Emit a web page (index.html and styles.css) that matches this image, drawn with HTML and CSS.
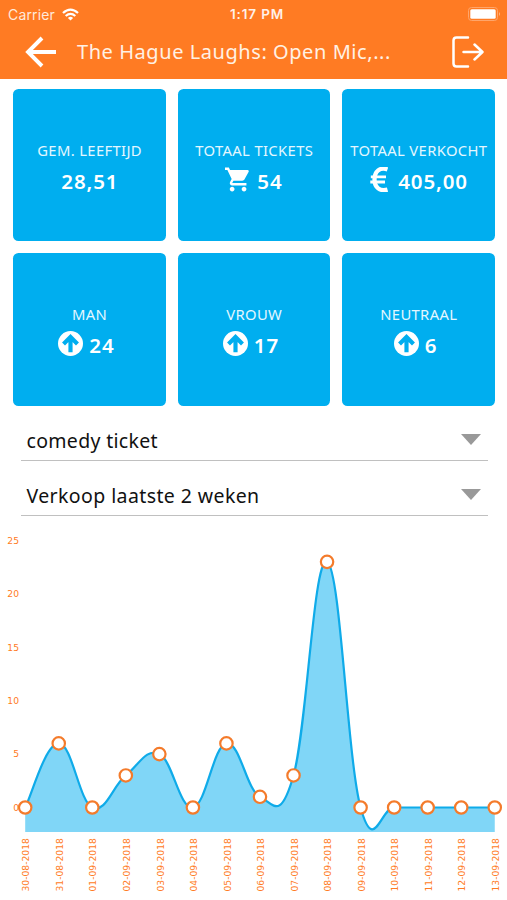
FILE: index.html
```html
<!DOCTYPE html>
<html lang="nl">
<head>
<meta charset="utf-8">
<meta name="viewport" content="width=device-width">
<title>The Hague Laughs: Open Mic</title>
<link rel="stylesheet" href="styles.css">
</head>
<body>
<header class="header">
  <div class="status">
    <div class="carrier"><span>Carrier</span>
      <svg class="wifi" width="17" height="13" viewBox="0 0 17 13" fill="none" stroke="#fff" stroke-width="2.300"><path d="M1 5Q8.500-1.800 16 5M3.700 8Q8.500 3.700 13.300 8"/><path d="M8.500 12.500L5.900 9.900Q8.500 7.800 11.100 9.900Z" fill="#fff" stroke="none"/></svg>
    </div>
    <span class="time">1:17 PM</span>
    <svg class="battery" width="34" height="14" viewBox="0 0 34 14"><rect x=".5" y=".5" width="29" height="13" rx="3" fill="none" stroke="#ffa56a"/><rect x="2.300" y="2.200" width="25.400" height="9.600" rx="1.500" fill="#fff"/><path d="M31 5Q33 7 31 9Z" fill="#ffb481"/></svg>
  </div>
  <div class="bar">
    <svg class="back" width="32" height="32" viewBox="0 0 32 32" fill="none" stroke="#fff" stroke-width="3.900"><path d="M31 16H3M17 2L3 16L17 30"/></svg>
    <h1 class="title">The Hague Laughs: Open Mic,...</h1>
    <svg class="logout" width="32" height="32" viewBox="0 0 32 32" fill="none" stroke="#fff" stroke-width="2.500" stroke-linecap="round" stroke-linejoin="round"><path d="M16 1.500H4.500Q1.500 1.500 1.500 4.500V27.500Q1.500 30.500 4.500 30.500H16M11.500 16H30M22.500 8.500L30.500 16L22.500 23.500"/></svg>
  </div>
</header>
<main>
  <section class="tiles">
    <div class="tile"><span class="label">GEM. LEEFTIJD</span><div class="value"><b>28,51</b></div></div>
    <div class="tile"><span class="label">TOTAAL TICKETS</span><div class="value"><svg class="icon cart" viewBox="1 2 21 20" fill="#fff"><path d="M7 18c-1.100 0-2 .9-2 2s.9 2 2 2 2-.9 2-2-.9-2-2-2zM1 2v2h2l3.600 7.600-1.350 2.450C4.500 15.400 5.500 17 7 17h12v-2H7.400c-.14 0-.25-.11-.25-.25L8.100 13h7.450c.75 0 1.400-.4 1.750-1l3.600-6.500C21.200 4.800 20.700 4 20 4H5.200L4.250 2H1zm16 16c-1.100 0-2 .9-2 2s.9 2 2 2 2-.9 2-2-.9-2-2-2z"/></svg><b>54</b></div></div>
    <div class="tile"><span class="label">TOTAAL VERKOCHT</span><div class="value sold"><svg class="euro" viewBox="0 0 18 25" fill="none" stroke="#fff"><path d="M17.500 2.400C10-.3 4.500 4.500 4.500 12.500S10 24.700 17.500 22.600" stroke-width="4.300"/><path d="M.8 9.800H16M.3 15H15" stroke-width="2.800"/></svg><b>405,00</b></div></div>
    <div class="tile"><span class="label">MAN</span><div class="value trend"><svg class="icon" viewBox="0 0 24 24"><circle cx="12" cy="12" r="12" fill="#fff"/><path d="M12 20.500V6M5.300 12.500L12 5.800L18.700 12.500" fill="none" stroke="#00aeef" stroke-width="4"/></svg><b>24</b></div></div>
    <div class="tile"><span class="label">VROUW</span><div class="value trend"><svg class="icon" viewBox="0 0 24 24"><circle cx="12" cy="12" r="12" fill="#fff"/><path d="M12 20.500V6M5.300 12.500L12 5.800L18.700 12.500" fill="none" stroke="#00aeef" stroke-width="4"/></svg><b>17</b></div></div>
    <div class="tile"><span class="label">NEUTRAAL</span><div class="value trend"><svg class="icon" viewBox="0 0 24 24"><circle cx="12" cy="12" r="12" fill="#fff"/><path d="M12 20.500V6M5.300 12.500L12 5.800L18.700 12.500" fill="none" stroke="#00aeef" stroke-width="4"/></svg><b>6</b></div></div>
  </section>
  <section class="filters">
    <div class="select ticket"><span>comedy ticket</span><i class="caret"></i></div>
    <div class="select"><span>Verkoop laatste 2 weken</span><i class="caret"></i></div>
  </section>
  <svg id="chart" class="chart" width="507" height="384" viewBox="0 516 507 384"></svg>
</main>
<script src="chart.js"></script>
</body>
</html>
```
FILE: styles.css
```css
* { box-sizing: border-box; }
body { margin: 0; width: 507px; height: 900px; overflow: hidden; background: #fff; font-family: "Noto Sans", sans-serif; }
svg { display: block; flex: none; }
.header { height: 79.3px; background: #ff7b23; color: #fff; }
.status { height: 27px; display: grid; grid-template-columns: 1fr auto 1fr; align-items: center; padding: 0 5px 0 8px; font: 14px/27px Inter, sans-serif; }
.carrier { display: flex; align-items: center; gap: 7px; color: #ffe9db; letter-spacing: .15px; }
.time { font-weight: 600; font-size: 13.500px; color: #fff1e8; letter-spacing: .85px; margin-left: 4px; padding-top: 1px; }
.battery { justify-self: end; }
.bar { height: 50px; display: flex; align-items: center; padding: 0 23px 0 25px; }
.title { margin: 0 0 0 20px; flex: 1; font-size: 20px; line-height: 30px; font-weight: 400; letter-spacing: .56px; white-space: nowrap; color: #fff1e4; }
.tiles { display: grid; grid-template-columns: repeat(3, 152.3px); grid-auto-rows: 152.3px; gap: 12.3px; padding: 9.500px 13.300px 0; }
.tile { display: flex; flex-direction: column; align-items: center; padding-top: 50px; border-radius: 5.500px; background: #00aeef; color: #fff; white-space: nowrap; }
.label { font-size: 14.800px; line-height: 22px; letter-spacing: .35px; margin-right: -.35px; color: #e4f7ff; }
.value { display: flex; align-items: center; height: 38px; gap: 7px; font-size: 20.500px; line-height: 38px; }
.value b { font-weight: 600; letter-spacing: .9px; margin-right: -.9px; padding-top: 2px; }
.icon { width: 25px; height: 25px; }
.cart { margin-left: -1px; }
.euro { width: 18px; height: 25px; }
.sold { gap: 10px; }
.trend { margin-right: 7px; }
.trend .icon { margin-top: -1px; }
.trend b { margin-left: -1px; }
.filters { padding: 15px 19.500px 0 20.500px; }
.select { height: 40px; display: flex; align-items: center; justify-content: space-between; border-bottom: 1.500px solid #c0c0c0; padding: 0 7px 0 6px; font-size: 19.500px; letter-spacing: .4px; color: #111; }
.ticket { letter-spacing: .32px; }
.select + .select { margin-top: 15px; }
.caret { border: solid transparent; border-width: 11px 10.500px 0; border-top-color: #999; margin-top: -2px; }
.chart { font-family: "DejaVu Sans", sans-serif; font-size: 9.200px; fill: #ff7b23; }
.area { fill: #80d6f7; }
.line { fill: none; stroke: #0fabe9; stroke-width: 2.200; }
.dot { fill: #fff; stroke: #f47b2b; stroke-width: 2.200; }
```
FILE: chart.js
```js
const values = [0, 6, 0, 3, 5, 0, 6, 1, 3, 23, 0, 0, 0, 0, 0];
const dates = ['30-08-2018', '31-08-2018', '01-09-2018', '02-09-2018', '03-09-2018', '04-09-2018', '05-09-2018', '06-09-2018', '07-09-2018', '08-09-2018', '09-09-2018', '10-09-2018', '11-09-2018', '12-09-2018', '13-09-2018'];
const yOf = v => 807.5 - v * 10.68;
const pts = values.map((v, i) => [25.2 + i * 33.54, yOf(v)]);
const at = i => pts[Math.max(0, Math.min(pts.length - 1, i))];
const tension = 0.2;
let line = `M${pts[0]}`;
for (let i = 1; i < pts.length; i++) {
  const a = at(i - 2), b = at(i - 1), c = at(i), d = at(i + 1);
  line += `C${b.map((v, k) => v + (c[k] - a[k]) * tension)} ${c.map((v, k) => v - (d[k] - b[k]) * tension)} ${c}`;
}
let out = `<path class="area" d="${line}V832H${pts[0][0]}Z"/><path class="line" d="${line}"/>`;
for (let v = 0; v <= 25; v += 5) out += `<text x="19" y="${yOf(v) + 3.3}" text-anchor="end">${v}</text>`;
pts.forEach(([x, y], i) => {
  out += `<circle class="dot" cx="${x}" cy="${y}" r="6.200"/><text transform="translate(${x + 4.2} 891.500) rotate(-90)">${dates[i]}</text>`;
});
document.getElementById('chart').innerHTML = out;
```
